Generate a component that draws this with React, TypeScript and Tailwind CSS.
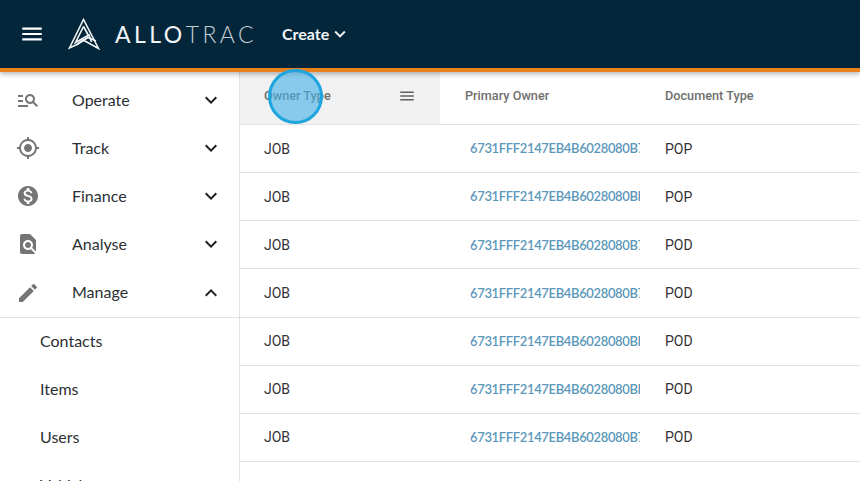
import React from "react";
import { MdManageSearch, MdGpsFixed, MdMonetizationOn, MdFindInPage, MdEdit, MdExpandMore, MdExpandLess, MdMenu } from "react-icons/md";

const nav = [
  { label: "Operate", Icon: MdManageSearch, open: false },
  { label: "Track", Icon: MdGpsFixed, open: false },
  { label: "Finance", Icon: MdMonetizationOn, open: false },
  { label: "Analyse", Icon: MdFindInPage, open: false },
  { label: "Manage", Icon: MdEdit, open: true },
];

const rows = [
  ["6731FFF2147EB4B6028080B7A", "POP"],
  ["6731FFF2147EB4B6028080BE1", "POP"],
  ["6731FFF2147EB4B6028080B7C", "POD"],
  ["6731FFF2147EB4B6028080B7D", "POD"],
  ["6731FFF2147EB4B6028080BE2", "POD"],
  ["6731FFF2147EB4B6028080BE3", "POD"],
  ["6731FFF2147EB4B6028080B7E", "POD"],
];

function Logo() {
  return (
    <svg width="32" height="32" viewBox="0 0 32 32" fill="none" stroke="#f2f5f6" strokeWidth="1.6" strokeLinejoin="miter">
      <path d="M15.5 1.5 L1.5 30 L9 26.5 L15 22 L30.5 30.5 Z" />
      <path d="M15.5 8.5 L7.5 24.5 L21 17 L23.5 24" />
      <path d="M15.5 8.5 L20.5 17.5" />
      <path d="M9 26.5 L20 19.5 L28 23" />
    </svg>
  );
}

export default function App() {
  return (
    <div className="relative flex h-[481px] w-[860px] flex-col overflow-hidden bg-white font-['Lato','Noto_Sans',sans-serif]">
      <header className="z-10 flex h-[72px] shrink-0 items-center border-b-4 border-[#e8821e] bg-[#03263b] pl-[20px] shadow-[0_2px_5px_rgba(0,0,0,0.3)]">
        <MdMenu className="ml-[-1px] text-white" size={26} />
        <div className="ml-[23px]">
          <Logo />
        </div>
        <div className="ml-[15px] flex text-[23px] leading-none tracking-[0.15em] text-[#f2f5f6]">
          <span className="font-normal">ALLO</span>
          <span className="font-light text-[#c3ced4]">TRAC</span>
        </div>
        <div className="ml-[25px] flex items-center text-[16px] font-bold text-[#f2f5f6]">
          <span>Create</span>
          <MdExpandMore size={22} />
        </div>
      </header>

      <div className="flex min-h-0 flex-1">
        <aside className="w-[240px] shrink-0 overflow-hidden border-r border-[#e2e2e2] pt-1">
          {nav.map(({ label, Icon, open }) => (
            <div key={label} className="flex h-[48.14px] items-center pl-[16px] pr-[16px] text-[#2b2f33]">
              <Icon size={24} className="text-[#757575]" />
              <span className="ml-[32px] flex-1 pb-px text-[16px]">{label}</span>
              {open ? <MdExpandLess size={24} className="text-[#222]" /> : <MdExpandMore size={24} className="text-[#222]" />}
            </div>
          ))}
          <div className="border-t border-[#e2e2e2]">
            {["Contacts", "Items", "Users", "Vehicles"].map((s) => (
              <div key={s} className="flex h-[48px] shrink-0 items-center pb-[2px] pl-[40px] text-[16px] text-[#2b2f33]">
                {s}
              </div>
            ))}
          </div>
        </aside>

        <main className="min-w-0 flex-1 font-['Roboto',sans-serif]">
          <div className="flex h-[53px] border-b border-[#e2e2e2] text-[12.7px] font-medium text-[#6f6f6f]">
            <div className="flex w-[200px] items-center justify-between bg-[#f1f1f1] pb-[5px] pl-[24px] pr-[24px]">
              <span>Owner Type</span>
              <MdMenu size={18} className="text-[#616161]" />
            </div>
            <div className="flex w-[200px] items-center pb-[5px] pl-[25px]">Primary Owner</div>
            <div className="flex items-center pb-[5px] pl-[25px]">Document Type</div>
          </div>
          {rows.map(([id, doc], i) => (
            <div key={i} className="flex h-[48.14px] items-center border-b border-[#e2e2e2] pt-px text-[14px] text-[#333]">
              <div className="w-[200px] pl-[24px]">JOB</div>
              <div className="w-[200px] pl-[30px]">
                <div className="w-[170px] overflow-hidden whitespace-nowrap text-[13px] font-semibold tracking-[-0.35px] text-[#5b97ba] font-['Lato',sans-serif]">{id}</div>
              </div>
              <div className="pl-[25px]">{doc}</div>
            </div>
          ))}
        </main>
      </div>

      <div className="absolute left-[268px] top-[69px] z-20 h-[55px] w-[55px] rounded-full border-[3px] border-[#1ea5de] bg-[#42b0e8]/60" />
    </div>
  );
}
